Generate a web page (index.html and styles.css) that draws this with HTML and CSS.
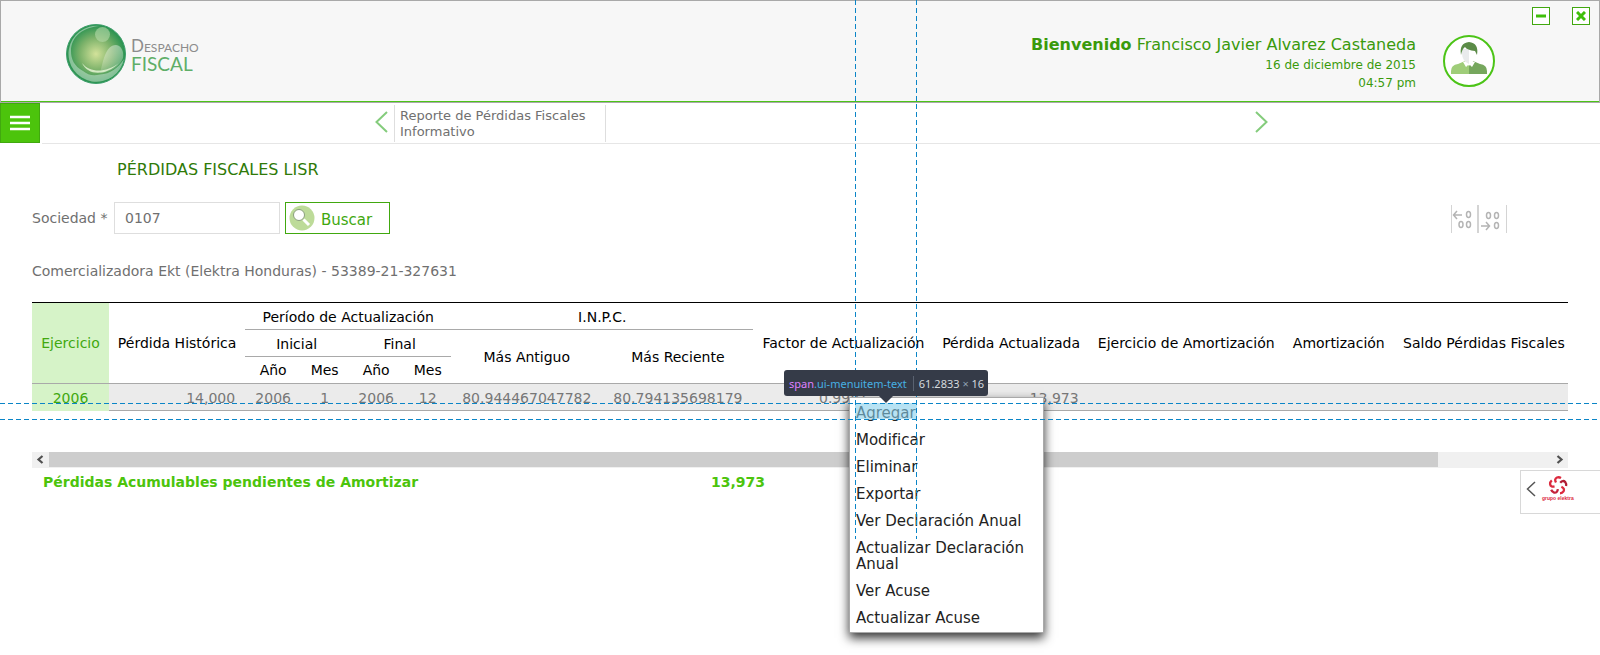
FILE: index.html
```html
<!DOCTYPE html>
<html lang="es">
<head>
<meta charset="utf-8">
<title>Despacho Fiscal</title>
<link rel="stylesheet" href="styles.css">
</head>
<body>
<header class="header">
  <div class="logo">
    <svg width="60" height="60" viewBox="0 0 60 60" aria-hidden="true">
      <defs>
        <radialGradient id="ball" cx="0.5" cy="0.5" r="0.55">
          <stop offset="0" stop-color="#d3e29a"/>
          <stop offset="0.5" stop-color="#7cb26a"/>
          <stop offset="1" stop-color="#138a4a"/>
        </radialGradient>
        <linearGradient id="glass" x1="0" y1="0" x2="0" y2="1">
          <stop offset="0" stop-color="#fff" stop-opacity="0.4"/>
          <stop offset="1" stop-color="#fff" stop-opacity="0.15"/>
        </linearGradient>
      </defs>
      <circle cx="30" cy="30" r="29.5" fill="url(#ball)" stroke="#3f9f6c"/>
      <path d="M34 2A28 28 0 1 0 58 35C52 44 44 50 34 50.500C27 52 22 51 17 47C8 42 5 35 5 27C5 12 18 3 34 2Z" fill="#c6e4d2" fill-opacity="0.55"/>
      <circle cx="36.500" cy="10.500" r="7.500" fill="#b5dbaa" fill-opacity="0.6"/>
      <path d="M34 49C37 39 39 21 50 21C56 22 58 28 57 34C54 42 45 48 34 49Z" fill="url(#glass)"/>
      <path d="M16 39C22 52 40 52 53 39C41 48 25 50 16 39Z" fill="#e4f3d4" fill-opacity="0.85"/>
    </svg>
    <div class="logo-text">
      <span class="logo-top"><span class="logo-initial">D</span>ESPACHO</span>
      <span class="logo-bottom">FISCAL</span>
    </div>
  </div>
  <div class="user">
    <div class="user-name"><strong>Bienvenido</strong> Francisco Javier Alvarez Castaneda</div>
    <div>16 de diciembre de 2015</div>
    <div>04:57 pm</div>
  </div>
  <svg class="avatar" width="52" height="52" viewBox="0 0 52 52" role="img" aria-label="Usuario">
    <circle cx="26" cy="26" r="25" fill="#fff" stroke="#4cc417" stroke-width="2"/>
    <path d="M8 39V36Q8 30 15 29L22 26L26 31V39Z" fill="#9fcd79"/>
    <path d="M44 39V36Q44 30 37 29L30 26L26 31V39Z" fill="#76a75d"/>
    <path d="M20 27L24 26H28L32 27L29 32L26 29L23 32Z" fill="#fff"/>
    <path d="M19 14H26V29Q19 26 19 18Z" fill="#e9ebec"/>
    <path d="M26 14H33V18Q33 26 26 29Z" fill="#fff"/>
    <path d="M18 20Q16 8 26 7Q36 8 34 20L32 16Q24 15 22 12Q19 14 18 20Z" fill="#5b8b47"/>
  </svg>
  <div class="window-buttons">
    <button class="window-button" type="button" aria-label="Minimizar"><svg width="10" height="10" viewBox="0 0 10 10"><path d="M0 5H10" stroke="#3fbf0a" stroke-width="3"/></svg></button>
    <button class="window-button" type="button" aria-label="Cerrar"><svg width="10" height="10" viewBox="0 0 10 10"><path d="M1 1L9 9M9 1L1 9" stroke="#3fbf0a" stroke-width="3"/></svg></button>
  </div>
</header>

<nav class="nav">
  <button class="menu-button" type="button" aria-label="Menú"><svg width="20" height="16" viewBox="0 0 20 16"><path d="M0 2H20M0 8H20M0 14H20" stroke="#fff" stroke-width="2.500"/></svg></button>
  <div class="tabs">
    <button class="arrow" type="button" aria-label="Anterior"><svg width="13" height="22" viewBox="0 0 13 22"><path d="M12 1L1.500 11L12 21" fill="none" stroke="#84cc7c" stroke-width="2"/></svg></button>
    <a class="tab" href="#">Reporte de Pérdidas Fiscales Informativo</a>
    <button class="arrow arrow-next" type="button" aria-label="Siguiente"><svg width="13" height="22" viewBox="0 0 13 22"><path d="M1 1L11.500 11L1 21" fill="none" stroke="#84cc7c" stroke-width="2"/></svg></button>
  </div>
</nav>

<main class="main">
  <h1 class="title">PÉRDIDAS FISCALES LISR</h1>
  <form class="search">
    <label class="search-label" for="sociedad">Sociedad *</label>
    <input class="search-input" id="sociedad" type="text" value="0107">
    <button class="search-button" type="button">
      <svg width="26" height="26" viewBox="0 0 26 26" aria-hidden="true"><circle cx="13" cy="13" r="12.500" fill="#bddb99"/><path d="M14.500 14.500L20 20" stroke="#fff" stroke-width="3"/><circle cx="10" cy="10" r="5.500" fill="#fff" stroke="#8b9f7d" stroke-width="1"/></svg>
      <span class="search-text">Buscar</span>
    </button>
    <div class="decimals">
      <button class="decimal" type="button" aria-label="Aumentar decimales"><svg width="27" height="28" viewBox="0 0 27 28"><path d="M0.500 0V28M26.500 0V28" stroke="#d4d4d4"/><path d="M11 10H3M6 6L2.500 10L6 14" fill="none" stroke="#b4b4b4" stroke-width="1.500"/><g fill="none" stroke="#b4b4b4" stroke-width="1.500"><ellipse cx="17.500" cy="9.500" rx="2" ry="3"/><ellipse cx="10" cy="19.500" rx="2" ry="3"/><ellipse cx="17.500" cy="19.500" rx="2" ry="3"/></g></svg></button>
      <button class="decimal" type="button" aria-label="Disminuir decimales"><svg width="29" height="28" viewBox="0 0 29 28"><path d="M0.500 0V28M28.500 0V28" stroke="#d4d4d4"/><path d="M3 21H11M8 17L11.500 21L8 25" fill="none" stroke="#b4b4b4" stroke-width="1.500"/><g fill="none" stroke="#b4b4b4" stroke-width="1.500"><ellipse cx="10.500" cy="10.500" rx="2" ry="3"/><ellipse cx="18.500" cy="10.500" rx="2" ry="3"/><ellipse cx="18.500" cy="20.500" rx="2" ry="3"/></g></svg></button>
    </div>
  </form>
  <p class="company">Comercializadora Ekt (Elektra Honduras) - 53389-21-327631</p>

  <table class="grid">
    <colgroup>
      <col class="w-year"><col class="w-loss"><col class="w-anio"><col class="w-mes"><col class="w-anio"><col class="w-mes"><col class="w-inpc"><col class="w-inpc"><col class="w-factor"><col class="w-updated"><col class="w-exercise"><col class="w-amort"><col class="w-balance">
    </colgroup>
    <thead>
      <tr>
        <th class="key" rowspan="3">Ejercicio</th>
        <th rowspan="3">Pérdida Histórica</th>
        <th class="group" colspan="4">Período de Actualización</th>
        <th class="group" colspan="2">I.N.P.C.</th>
        <th rowspan="3">Factor de Actualización</th>
        <th rowspan="3">Pérdida Actualizada</th>
        <th rowspan="3">Ejercicio de Amortización</th>
        <th rowspan="3">Amortización</th>
        <th class="last" rowspan="3">Saldo Pérdidas Fiscales</th>
      </tr>
      <tr>
        <th class="group" colspan="2">Inicial</th>
        <th class="group" colspan="2">Final</th>
        <th rowspan="2">Más Antiguo</th>
        <th rowspan="2">Más Reciente</th>
      </tr>
      <tr class="units"><th>Año</th><th>Mes</th><th>Año</th><th>Mes</th></tr>
    </thead>
    <tbody>
      <tr>
        <td class="key">2006</td><td class="num">14,000</td><td>2006</td><td>1</td><td>2006</td><td>12</td><td>80.944467047782</td><td>80.794135698179</td><td>0.9981</td><td class="num">13,973</td><td></td><td></td><td></td>
      </tr>
    </tbody>
  </table>

  <div class="scrollbar">
    <svg class="scroll-arrow" width="17" height="16" viewBox="0 0 17 16"><path d="M10.500 4L6.500 7.500L10.500 11" fill="none" stroke="#505050" stroke-width="2.200"/></svg>
    <div class="scroll-track"><div class="scroll-thumb"></div></div>
    <svg class="scroll-arrow" width="17" height="16" viewBox="0 0 17 16"><path d="M6.500 4L10.500 7.500L6.500 11" fill="none" stroke="#505050" stroke-width="2.200"/></svg>
  </div>
  <div class="totals">
    <span class="totals-label">Pérdidas Acumulables pendientes de Amortizar</span>
    <span>13,973</span>
  </div>
</main>

<aside class="brand">
  <svg width="10" height="16" viewBox="0 0 10 16" aria-hidden="true"><path d="M9 1L1.500 8L9 15" fill="none" stroke="#555" stroke-width="1.500"/></svg>
  <div class="brand-logo">
    <svg width="20" height="19" viewBox="0 0 20 19" aria-hidden="true">
      <g fill="none" stroke-width="2.300">
        <path d="M8 6.500Q6 3 9 1.500Q11 0.800 13 2" stroke="#dc2a3e"/>
        <path d="M8 6.500Q6 3 9 1.500Q11 0.800 13 2" stroke="#b01e35" transform="rotate(72 10 9.500)"/>
        <path d="M8 6.500Q6 3 9 1.500Q11 0.800 13 2" stroke="#dc2a3e" transform="rotate(144 10 9.500)"/>
        <path d="M8 6.500Q6 3 9 1.500Q11 0.800 13 2" stroke="#c4223a" transform="rotate(216 10 9.500)"/>
        <path d="M8 6.500Q6 3 9 1.500Q11 0.800 13 2" stroke="#dc2a3e" transform="rotate(288 10 9.500)"/>
      </g>
    </svg>
    <span class="brand-name">grupo elektra</span>
  </div>
</aside>

<ul class="context-menu">
  <li><a href="#"><span class="inspected">Agregar</span></a></li>
  <li><a href="#">Modificar</a></li>
  <li><a href="#">Eliminar</a></li>
  <li><a href="#">Exportar</a></li>
  <li><a href="#">Ver Declaración Anual</a></li>
  <li><a href="#">Actualizar Declaración Anual</a></li>
  <li><a href="#">Ver Acuse</a></li>
  <li><a href="#">Actualizar Acuse</a></li>
</ul>

<div class="guide-box"></div>
<div class="guide guide-h guide-top"></div>
<div class="guide guide-h guide-bottom"></div>
<div class="guide guide-v guide-left"></div>
<div class="guide guide-v guide-right"></div>
<div class="infobar"><span><span class="info-tag">span</span><span class="info-class">.ui-menuitem-text</span></span><span class="info-size">61.2833 <span class="info-times">×</span> 16</span></div>
</body>
</html>
```

FILE: styles.css
```css
* { box-sizing: border-box; }
body {
  margin: 0;
  position: relative;
  min-height: 100vh;
  overflow: hidden;
  background: #fff;
  color: #707070;
  font: 14px/16px Verdana, "DejaVu Sans", sans-serif;
}
button { padding: 0; border: 0; background: none; font: inherit; cursor: pointer; }
svg { display: block; }
a { color: inherit; text-decoration: none; }

.header {
  display: flex;
  align-items: flex-start;
  height: 103px;
  padding: 6px 9px 0 65px;
  border: 1px solid #a9a9a9;
  background: #f7f7f7;
  box-shadow: inset 0 -1px #4cc417;
}
.logo { display: flex; gap: 5px; margin-top: 17px; }
.logo-text { display: flex; flex-direction: column; padding-top: 14px; font-family: Lato, "Open Sans", sans-serif; }
.logo-top { font-size: 12px; line-height: 16px; color: #8c8c8c; }
.logo-initial { font-size: 17px; }
.logo-bottom { font-size: 19px; line-height: 16px; color: #5fae68; }
.user { margin-left: auto; margin-top: 27px; text-align: right; color: #3a9a0c; font-size: 12px; line-height: 18px; }
.user-name { font-size: 16px; line-height: 22px; }
.avatar { margin: 28px 37px 0 27px; }
.window-buttons { display: flex; gap: 22px; }
.window-button { display: grid; place-items: center; width: 18px; height: 18px; border: 1px solid #41a80f; background: #fff; }

.nav { display: flex; gap: 2px; }
.menu-button { display: grid; place-items: center; width: 40px; height: 40px; border: 1px solid #41a80f; background: #4cc40c; }
.tabs { flex: 1; display: flex; align-items: flex-start; padding: 2px 332px 0 333px; border-bottom: 1px solid #e6e6e6; height: 41px; }
.arrow { margin: 6px 6px 0 0; }
.arrow-next { margin: 6px 0 0 auto; }
.tab { width: 212px; height: 37px; padding: 3px 5px 0; border: solid #dedede; border-width: 0 1px; font-size: 13px; }

.main { padding: 17px 32px 0; }
.title { margin: 0 0 0 85px; font-size: 16px; line-height: 18px; font-weight: 400; color: #2f7a08; }
.search { display: flex; align-items: center; margin-top: 23px; }
.search-label { width: 82px; }
.search-input { width: 166px; height: 32px; margin-right: 5px; padding: 0 10px; border: 1px solid #dedede; color: inherit; font: inherit; }
.search-button { display: flex; align-items: center; gap: 6px; width: 105px; height: 32px; padding-left: 3px; border: 1px solid #41a80f; background: #fff; color: #41a80f; font-size: 15px; }
.search-text { padding-top: 3px; }
.decimals { display: flex; margin: 2px 61px 0 auto; }
.company { margin: 29px 0 23px; }

.grid { width: 100%; table-layout: fixed; border-collapse: separate; border-spacing: 0; border-top: 1px solid #000; text-align: center; color: #000; }
.grid th, .grid td { height: 27px; padding: 0; font-weight: 400; white-space: nowrap; }
.grid th.group { border-bottom: 1px solid #a9a9a9; padding-top: 2px; }
.grid .units th { height: 26px; }
.grid th.last { padding-left: 6px; }
.grid td { height: 28px; border-top: 1px solid #a9a9a9; border-bottom: 1px solid #a9a9a9; background: #ebebeb; color: #777; padding-top: 2px; }
.grid th.key, .grid td.key { background: #d6f3c8; color: #41a80f; }
.grid td.key { border-bottom-color: #d6f3c8; }
.grid td.num { text-align: right; padding-right: 10px; }
.w-year { width: 77px; }
.w-loss { width: 136px; }
.w-anio { width: 56px; }
.w-mes { width: 47px; }
.w-inpc { width: 151px; }
.w-factor { width: 180px; }
.w-updated { width: 155px; }
.w-exercise { width: 195px; }
.w-amort { width: 110px; }
.w-balance { width: 174px; }

.scrollbar { display: flex; margin-top: 41px; background: #f0f0f0; }
.scroll-track { flex: 1; }
.scroll-thumb { width: 92.5%; height: 15px; background: #cdcdcd; }
.totals { display: flex; padding-left: 11px; margin-top: 6px; font-weight: 700; color: #4cc40c; }
.totals-label { width: 668px; }

.brand { position: absolute; right: 0; top: 470px; display: flex; gap: 6px; width: 80px; height: 44px; padding: 5px; border: 1px solid #d8d8d8; border-right: 0; background: #fff; }
.brand > svg { margin-top: 5px; }
.brand-logo { display: flex; flex-direction: column; align-items: center; }
.brand-name { font-size: 5px; line-height: 6px; font-weight: 700; color: #dc2a3e; font-family: "Liberation Sans", sans-serif; }

.context-menu {
  position: absolute;
  left: 849px;
  top: 397px;
  display: flex;
  flex-direction: column;
  gap: 11px;
  width: 195px;
  margin: 0;
  padding: 7px 6px 6px;
  border: 1px solid #a9a9a9;
  background: #fff;
  box-shadow: 0 5px 10px rgba(0, 0, 0, 0.8);
  list-style: none;
  color: #222;
  font-size: 15px;
}
.context-menu a { display: block; }

.guide-box { position: absolute; left: 855px; top: 403px; width: 62px; height: 16px; background: rgba(135, 206, 235, 0.6); }
.guide { position: absolute; }
.guide-h { left: 0; right: 0; height: 1px; background: repeating-linear-gradient(90deg, #0a85c7 0 5px, transparent 5px 8px); }
.guide-v { top: 0; height: 539px; width: 1px; background: repeating-linear-gradient(#0a85c7 0 5px, transparent 5px 8px); }
.guide-top { top: 403px; }
.guide-bottom { top: 419px; }
.guide-left { left: 855px; }
.guide-right { left: 916px; }

.infobar { position: absolute; left: 784px; top: 370px; display: flex; align-items: center; height: 26px; padding: 0 4px 0 5px; border-radius: 3px; background: #353b48; color: #d4d9de; font: 11px/15px "Noto Sans", sans-serif; white-space: nowrap; }
.infobar::after { content: ""; position: absolute; left: 95px; top: 26px; border: solid transparent; border-width: 7px 7px 0; border-top-color: #353b48; }
.info-tag { color: #df80ff; }
.info-class { color: #46afe3; }
.info-size { margin-left: 6px; padding-left: 5px; border-left: 1px solid #5a6270; }
.info-times { color: #8fa1b2; }
```
